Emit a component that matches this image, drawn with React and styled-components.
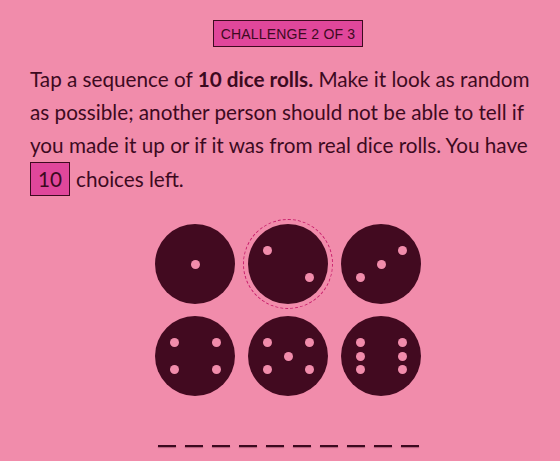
import React from 'react';
import styled, { createGlobalStyle } from 'styled-components';

const GlobalStyle = createGlobalStyle`
  html, body {
    margin: 0;
    padding: 0;
    background: #f18cab;
  }
  body {
    font-family: Lato, "Liberation Sans", sans-serif;
    color: #3d0a1f;
  }
`;

const Page = styled.div`
  width: 560px;
  height: 461px;
  box-sizing: border-box;
  padding: 20px 0 0 16px;
  display: flex;
  flex-direction: column;
  align-items: center;
  overflow: hidden;
`;

const Badge = styled.div`
  box-sizing: border-box;
  height: 27px;
  padding: 0 7px;
  display: flex;
  align-items: center;
  background: #e0479b;
  border: 1px solid #3d0a1f;
  font-family: "Liberation Sans", Arial, sans-serif;
  font-size: 14px;
  letter-spacing: 0.2px;
  text-transform: uppercase;
`;

const Prompt = styled.p`
  align-self: flex-start;
  margin: 16px 0 0 14px;
  font-size: 20.7px;
  line-height: 33px;
  white-space: nowrap;
`;

const Count = styled.span`
  display: inline-flex;
  align-items: center;
  justify-content: center;
  box-sizing: border-box;
  width: 40px;
  height: 34px;
  margin-right: 6px;
  background: #e0479b;
  border: 1px solid #3d0a1f;
  vertical-align: baseline;
`;

const Grid = styled.div`
  margin-top: 28px;
  display: grid;
  grid-template-columns: repeat(3, 80px);
  column-gap: 13px;
  row-gap: 12px;
`;

const Die = styled.button`
  position: relative;
  width: 80px;
  height: 80px;
  padding: 0;
  border: none;
  border-radius: 50%;
  background: #420a20;
  cursor: pointer;
  &::after {
    content: '';
    display: ${(p) => (p.$active ? 'block' : 'none')};
    position: absolute;
    inset: -5px;
    border-radius: 50%;
    border: 1.5px dashed #c8206c;
  }
`;

const Pip = styled.span`
  position: absolute;
  width: 9px;
  height: 9px;
  margin: -4.5px 0 0 -4.5px;
  border-radius: 50%;
  background: #f18cab;
`;

const Slots = styled.div`
  margin-top: 49px;
  display: flex;
  gap: 9px;
`;

const Slot = styled.span`
  width: 18px;
  height: 2px;
  background: #3d0a1f;
  box-shadow: 0 1px 1px rgba(61, 10, 31, 0.35);
`;

const L = 19;
const R = 61;
const T = 26.5;
const B = 53.5;
const M = 40;

const pips = {
  1: [[M, M]],
  2: [[L, T], [R, B]],
  3: [[L, B], [M, M], [R, T]],
  4: [[L, T], [R, T], [L, B], [R, B]],
  5: [[L, T], [R, T], [M, M], [L, B], [R, B]],
  6: [[L, T], [R, T], [L, M], [R, M], [L, B], [R, B]],
};

export default function App() {
  return (
    <>
      <GlobalStyle />
      <Page>
        <Badge>Challenge 2 of 3</Badge>
        <Prompt>
          Tap a sequence of <b>10 dice rolls.</b> Make it look as random
          <br />
          as possible; another person should not be able to tell if
          <br />
          you made it up or if it was from real dice rolls. You have
          <br />
          <Count>10</Count>choices left.
        </Prompt>
        <Grid>
          {[1, 2, 3, 4, 5, 6].map((n) => (
            <Die key={n} $active={n === 2} aria-label={`roll ${n}`}>
              {pips[n].map(([x, y], i) => (
                <Pip key={i} style={{ left: x, top: y }} />
              ))}
            </Die>
          ))}
        </Grid>
        <Slots>
          {Array.from({ length: 10 }).map((_, i) => (
            <Slot key={i} />
          ))}
        </Slots>
      </Page>
    </>
  );
}
